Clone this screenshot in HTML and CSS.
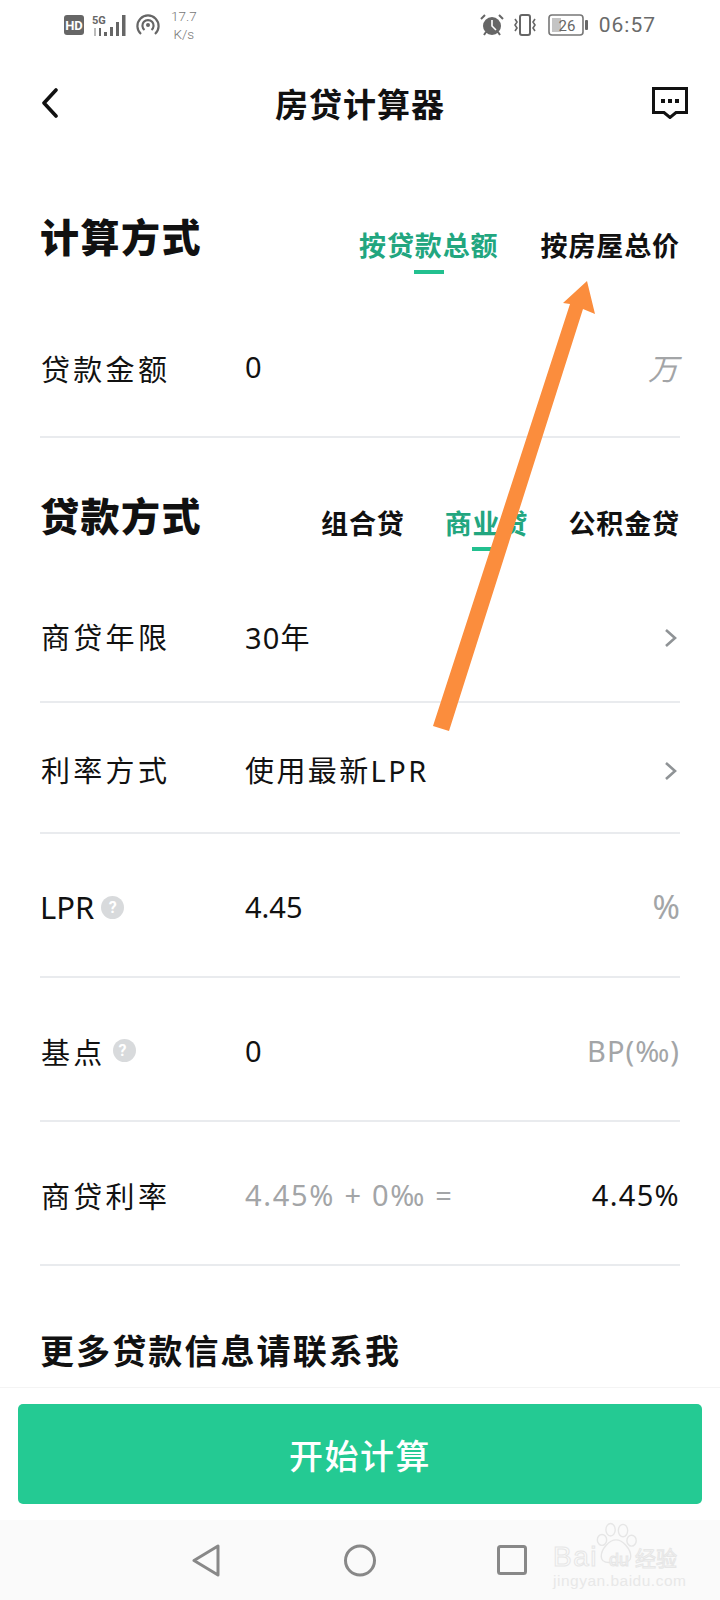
FILE: index.html
```html
<!DOCTYPE html>
<html lang="zh-CN">
<head>
    <meta charset="UTF-8">
    <title>房贷计算器</title>
    <link rel="stylesheet" href="styles.css">
</head>
<body>
<div class="screen">
    <div class="status-bar">
        <div class="status-bar__group">
            <svg class="ic-hd" width="20" height="20" viewBox="0 0 20 20"><rect width="20" height="20" rx="3" fill="#666"/><text x="10" y="15" text-anchor="middle" class="ic-hd__text">HD</text></svg>
            <svg class="ic-signal" width="36" height="22" viewBox="0 0 36 22">
                <text x="0" y="10" class="ic-signal__text">5G</text>
                <path d="M3 14v8" stroke="#bbb" stroke-width="2"/>
                <path d="M8 14v8" stroke="#666" stroke-width="2"/>
                <path d="M12 18h3v4h-3zM18 13h3v9h-3zM24 8h3v14h-3zM30 1h3.5v21H30z" fill="#666"/>
            </svg>
            <svg class="ic-hotspot" width="24" height="22" viewBox="0 0 24 22" fill="none" stroke="#666" stroke-width="2.2">
                <path d="M5 20A10.6 10.6 0 1 1 19 20"/>
                <path d="M8.5 16A5.6 5.6 0 1 1 15.5 16"/>
                <circle cx="12" cy="11" r="2" fill="#666" stroke="none"/>
            </svg>
            <div class="speed"><span>17.7</span><span>K/s</span></div>
        </div>
        <div class="status-bar__group">
            <svg width="24" height="22" viewBox="0 0 24 22">
                <circle cx="12" cy="12" r="9" fill="#666"/>
                <path d="M12 6v6l4 4" fill="none" stroke="#fff" stroke-width="1.6"/>
                <path d="M1 5l4-4M23 5l-4-4M4 21l2-3M20 21l-2-3" stroke="#666" stroke-width="2"/>
            </svg>
            <svg class="ic-vibrate" width="26" height="22" viewBox="0 0 26 22" fill="none" stroke="#666" stroke-width="2">
                <rect x="8" y="1" width="10" height="20" rx="2"/>
                <path d="M3 5l2 3-2 3 2 3-2 3M23 5l-2 3 2 3-2 3 2 3" stroke-width="1.6"/>
            </svg>
            <svg class="ic-battery" width="41" height="22" viewBox="0 0 41 22">
                <rect x="1" y="1" width="34" height="20" rx="3" fill="none" stroke="#777" stroke-width="1.6"/>
                <rect x="4" y="4" width="9" height="14" fill="#c4c4c4"/>
                <rect x="37" y="6" width="3" height="10" rx="1" fill="#666"/>
                <text x="19" y="16.5" text-anchor="middle" class="ic-battery__text">26</text>
            </svg>
            <span class="clock">06:57</span>
        </div>
    </div>

    <header class="top-nav">
        <svg class="top-nav__back" width="18" height="30" viewBox="0 0 18 30" fill="none" stroke="#111" stroke-width="3.6" stroke-linecap="round" stroke-linejoin="round"><path d="M15 2L3 15l12 13"/></svg>
        <h1 class="top-nav__title">房贷计算器</h1>
        <svg class="top-nav__msg" width="36" height="32" viewBox="0 0 36 32"><path d="M1.5 1.5h33v24H24l-6 5-6-5H1.5z" fill="none" stroke="#111" stroke-width="3"/><path d="M9 12h4v4H9zM16 12h4v4h-4zM23 12h4v4h-4z" fill="#111"/></svg>
    </header>

    <main class="content">
        <div class="section-head">
            <h2 class="section-head__title">计算方式</h2>
            <div class="tabs">
                <span class="tabs__item tabs__item--active">按贷款总额</span>
                <span class="tabs__item">按房屋总价</span>
            </div>
        </div>
        <div class="row row--first">
            <span class="row__label">贷款金额</span>
            <span class="row__value">0</span>
            <span class="row__unit row__unit--cn">万</span>
        </div>

        <div class="section-head section-head--second">
            <h2 class="section-head__title">贷款方式</h2>
            <div class="tabs">
                <span class="tabs__item">组合贷</span>
                <span class="tabs__item tabs__item--active">商业贷</span>
                <span class="tabs__item">公积金贷</span>
            </div>
        </div>
        <div class="row row--after-head">
            <span class="row__label">商贷年限</span>
            <span class="row__value row__value--years">30年</span>
            <svg class="row__arrow" width="14" height="20" viewBox="0 0 14 20" fill="none" stroke="#8f9396" stroke-width="2.6"><path d="M2 2l9 8-9 8"/></svg>
        </div>
        <div class="row">
            <span class="row__label">利率方式</span>
            <span class="row__value row__value--wide">使用最新LPR</span>
            <svg class="row__arrow" width="14" height="20" viewBox="0 0 14 20" fill="none" stroke="#8f9396" stroke-width="2.6"><path d="M2 2l9 8-9 8"/></svg>
        </div>
        <div class="row row--tall">
            <span class="row__label row__label--latin">LPR<i class="help">?</i></span>
            <span class="row__value">4.45</span>
            <span class="row__unit row__unit--pct">%</span>
        </div>
        <div class="row row--tall">
            <span class="row__label">基点<i class="help">?</i></span>
            <span class="row__value">0</span>
            <span class="row__unit row__unit--bp">BP(‰)</span>
        </div>
        <div class="row row--tall">
            <span class="row__label">商贷利率</span>
            <span class="row__value row__value--muted">4.45% + 0‰ =</span>
            <span class="row__result">4.45%</span>
        </div>

        <h3 class="more">更多贷款信息请联系我</h3>
    </main>

    <div class="action-bar">
        <button class="action-bar__btn">开始计算</button>
    </div>

    <nav class="sys-nav">
        <svg class="sys-nav__back" width="28" height="33" viewBox="0 0 28 33" fill="none" stroke="#888" stroke-width="3" stroke-linejoin="round"><path d="M26 2v29L2 16.5z"/></svg>
        <svg width="32" height="33" viewBox="0 0 32 33" fill="none" stroke="#888" stroke-width="3"><circle cx="16" cy="16.5" r="14.5"/></svg>
        <svg width="30" height="30" viewBox="0 0 30 30" fill="none" stroke="#888" stroke-width="3" stroke-linejoin="round"><rect x="1.5" y="1.5" width="27" height="27" rx="2"/></svg>
        <div class="watermark">
            <svg class="watermark__paw" width="42" height="42" viewBox="0 0 54 52" fill="none" stroke="#e6e6e6" stroke-width="1.8">
                <ellipse cx="20" cy="9" rx="6" ry="8"/>
                <ellipse cx="36" cy="10" rx="6" ry="8"/>
                <ellipse cx="9" cy="22" rx="6" ry="7"/>
                <ellipse cx="47" cy="23" rx="6" ry="7"/>
                <path d="M27 22c-9 0-19 12-19 21 0 6 5 8 10 8h18c6 0 10-3 10-8 0-9-10-21-19-21z"/>
            </svg>
            <div class="watermark__top"><span class="watermark__bai">Bai</span><span class="watermark__du">du</span><span class="watermark__cn">经验</span></div>
            <div class="watermark__url">jingyan.baidu.com</div>
        </div>
    </nav>

    <svg class="annotation" width="720" height="1600" viewBox="0 0 720 1600"><path d="M433 726L570 304 563 303 587 281 595 314 583 309 449 731z" fill="#fb8d3d"/></svg>
</div>
</body>
</html>
```

FILE: styles.css
```css
* { box-sizing: border-box; }

html, body {
    margin: 0;
    padding: 0;
}

body {
    background: #fff;
    color: #111;
    font-family: "Noto Sans", "Noto Sans CJK SC", sans-serif;
}

.screen {
    position: relative;
    display: flex;
    flex-direction: column;
    width: 720px;
    height: 1600px;
    overflow: hidden;
}

/* status bar */
.status-bar {
    display: flex;
    justify-content: space-between;
    align-items: center;
    height: 50px;
    padding: 0 64px;
    color: #666;
}

.status-bar__group {
    display: flex;
    align-items: center;
    gap: 8px;
}

.ic-hd__text {
    fill: #fff;
    font: 700 13px "Roboto", sans-serif;
}

.ic-signal__text {
    fill: #666;
    font: 700 11px "Roboto", sans-serif;
}

.ic-battery { margin-left: 2px; }

.ic-battery__text {
    fill: #666;
    font: 400 15px "Roboto", sans-serif;
}

.speed {
    display: flex;
    flex-direction: column;
    align-items: center;
    margin-left: 3px;
    font: 300 13.5px/18px "Roboto", sans-serif;
    color: #777;
}

.clock {
    margin-left: 2px;
    font: 400 21px "Roboto", sans-serif;
    letter-spacing: 1px;
    color: #6a6a6a;
}

/* title row */
.top-nav {
    display: grid;
    grid-template-columns: 1fr auto 1fr;
    align-items: center;
    height: 110px;
    padding: 0 32px 4px;
}

.top-nav__back { margin-left: 9px; }

.top-nav__title {
    margin: 0;
    font-family: "Noto Sans CJK SC", sans-serif;
    font-size: 33px;
    font-weight: 700;
    line-height: 50px;
    letter-spacing: 1px;
}

.top-nav__msg { justify-self: end; }

/* form */
.content {
    flex: 1;
    padding: 47px 40px 0;
}

.section-head {
    display: flex;
    justify-content: space-between;
    align-items: flex-start;
}

.section-head--second { margin-top: 48px; }

.section-head__title {
    margin: 0;
    font-family: "Noto Sans CJK SC", sans-serif;
    font-size: 39px;
    font-weight: 900;
    line-height: 56px;
    letter-spacing: 1.5px;
}

.tabs {
    display: flex;
    gap: 42px;
    margin-top: 20px;
}

.section-head--second .tabs {
    gap: 40px;
    margin-top: 19px;
}

.tabs__item {
    display: flex;
    flex-direction: column;
    align-items: center;
    font-family: "Noto Sans CJK SC", sans-serif;
    font-size: 27px;
    font-weight: 700;
    line-height: 36px;
    letter-spacing: 0.9px;
}

.tabs__item::after {
    content: "";
    display: block;
    width: 30px;
    height: 4px;
    margin-top: 7px;
}

.section-head--second .tabs__item::after { margin-top: 6px; }

.tabs__item--active { color: #22a67f; }

.tabs__item--active::after { background: #22c08f; }

.row {
    display: grid;
    grid-template-columns: 205px 1fr auto;
    align-items: center;
    height: 131px;
    padding: 48px 0 41px;
    border-bottom: 2px solid #e9ebee;
    font-size: 29px;
    line-height: 40px;
}

.row--first {
    height: 164px;
    padding: 72px 0 50px;
}

.row--after-head {
    height: 152px;
    padding: 67px 0 43px;
}

.row--tall {
    height: 144px;
    padding: 53px 0 49px;
}

.row__label {
    display: flex;
    align-items: center;
    margin-top: -4px;
    padding-left: 1px;
    font-family: "Noto Sans CJK SC", sans-serif;
    letter-spacing: 3.3px;
}

.row--first .row__label { margin-top: 2px; }

.row--tall .row__label { margin-top: -1px; }

.row--tall .row__label--latin {
    margin-top: 0;
    padding-left: 0;
    font-family: "Noto Sans", sans-serif;
    font-size: 31px;
    letter-spacing: 0;
}

.row__value--years { letter-spacing: 1.2px; }

.row__value--wide { letter-spacing: 2.4px; }

.row__value--muted {
    color: #a3a5a7;
    letter-spacing: 1.7px;
}

.row__result { letter-spacing: 1.3px; }

.row__unit {
    color: #a3a5a7;
    font-size: 29px;
}

.row__unit--cn {
    margin-right: 2px;
    font-family: "Noto Sans CJK SC", sans-serif;
    font-size: 30px;
    font-style: italic;
}

.row__unit--pct { font-size: 33px; }

.row__unit--bp { letter-spacing: 1px; }

.row__arrow { margin-right: 2px; }

.help {
    display: flex;
    justify-content: center;
    align-items: center;
    width: 23px;
    height: 23px;
    margin: 0 0 0 7px;
    border-radius: 50%;
    background: #d8dadc;
    color: #fff;
    font: 700 16px "Roboto", sans-serif;
}

.more {
    margin: 59px 0 0;
    font-family: "Noto Sans CJK SC", sans-serif;
    font-size: 34px;
    font-weight: 700;
    line-height: 50px;
    letter-spacing: 2.1px;
}

/* bottom */
.action-bar {
    padding: 16px 18px;
    border-top: 1px solid #f4f4f4;
}

.action-bar__btn {
    display: block;
    width: 100%;
    height: 100px;
    border: 0;
    border-radius: 5px;
    background: #24ca93;
    color: #fff;
    font-family: "Noto Sans CJK SC", sans-serif;
    font-size: 34px;
    font-weight: 500;
    letter-spacing: 1.5px;
}

.sys-nav {
    position: relative;
    display: flex;
    align-items: center;
    gap: 121px;
    height: 80px;
    padding: 0 0 0 192px;
    background: #fafafa;
}

.sys-nav__back { margin-right: 3px; }

.watermark {
    position: absolute;
    top: 6px;
    left: 553px;
    width: 130px;
    height: 74px;
    color: #e8e8e8;
}

.watermark__paw {
    position: absolute;
    top: -4px;
    left: 42px;
}

.watermark__top {
    position: absolute;
    top: 11px;
    left: 0;
    display: flex;
    align-items: baseline;
    font: 400 28px/40px "Liberation Sans", sans-serif;
    color: #fafafa;
    -webkit-text-stroke: 1px #e6e6e6;
}

.watermark__bai { letter-spacing: 1.5px; }

.watermark__du {
    margin-left: 11px;
    font-size: 18px;
}

.watermark__cn {
    margin-left: 6px;
    font-family: "Noto Sans CJK SC", sans-serif;
    font-size: 21px;
}

.watermark__url {
    position: absolute;
    top: 45px;
    left: 0;
    font: 400 15.5px/20px "Liberation Sans", sans-serif;
    letter-spacing: 0.5px;
    white-space: nowrap;
}

/* arrow drawn on top of the screenshot */
.annotation {
    position: absolute;
    top: 0;
    left: 0;
    pointer-events: none;
}
```
